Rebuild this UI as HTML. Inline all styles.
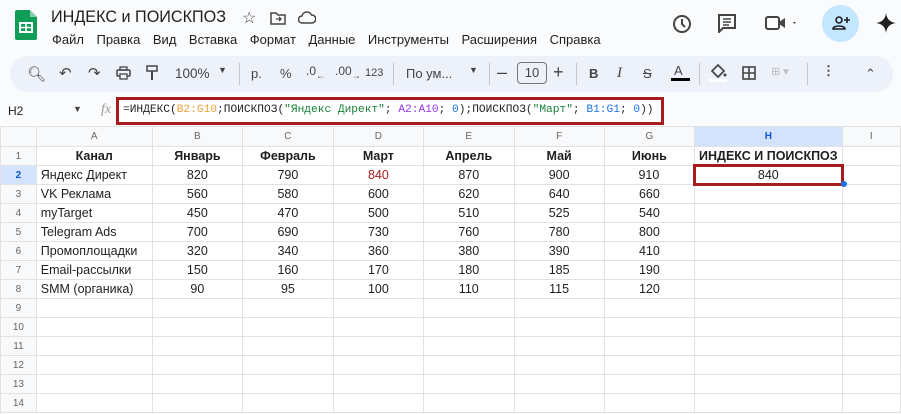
<!DOCTYPE html><html><head><meta charset="utf-8"><style>
*{box-sizing:border-box;margin:0;padding:0}
body{width:901px;height:414px;overflow:hidden;background:#f9fbfd;font-family:"Liberation Sans",Arial,sans-serif;position:relative;color:#1f1f1f}
.a{position:absolute}
.menu span{margin-right:12.5px;font-size:13px}
.tb{font-size:13px;color:#444}
table{border-collapse:collapse;position:absolute;left:0;top:126px;font-size:12.5px;background:#fff}
td{border:1px solid #e1e1e1;height:19px;padding:0 4px;white-space:nowrap;overflow:hidden}
td.rh{background:#f8f9fa;color:#666;font-size:10px;text-align:center;width:36px}
tr.ch td{background:#f8f9fa;color:#666;font-size:10px;text-align:center;height:20px}
td.n{text-align:center}
tr.h td{font-weight:bold;text-align:center}
</style></head><body>
<svg class="a" style="left:15px;top:10px" width="22" height="30" viewBox="0 0 22 30"><path d="M0 2a2 2 0 0 1 2-2h13l7 7v21a2 2 0 0 1-2 2H2a2 2 0 0 1-2-2z" fill="#0f9d58"/><path d="M15 0v7h7z" fill="#87ceac"/><rect x="5" y="13" width="12" height="9" fill="none" stroke="#fff" stroke-width="2"/><path d="M5 17.5h12M11 13v9" stroke="#fff" stroke-width="1.6"/></svg>
<div class="a" style="left:51px;top:8px;font-size:16.2px">ИНДЕКС и ПОИСКПОЗ</div>
<div class="a" style="left:242px;top:8px;font-size:16px;color:#444">☆</div>
<svg class="a" style="left:270px;top:12px" width="16" height="13"><path d="M1 1h5l2 2h7v9H1z" fill="none" stroke="#444" stroke-width="1.5"/><path d="M6 7h5M9 5l2 2-2 2" stroke="#444" fill="none" stroke-width="1.3"/></svg>
<svg class="a" style="left:298px;top:11px" width="18" height="13"><path d="M4 12a3.5 3.5 0 0 1 0-7 5 5 0 0 1 9.5-1A4 4 0 0 1 14 12z" fill="none" stroke="#444" stroke-width="1.5"/></svg>
<div class="a menu" style="left:52px;top:31px"><span>Файл</span><span>Правка</span><span>Вид</span><span>Вставка</span><span>Формат</span><span>Данные</span><span>Инструменты</span><span>Расширения</span><span>Справка</span></div>
<svg class="a" style="left:671px;top:13px" width="22" height="22"><circle cx="11" cy="11" r="8" fill="none" stroke="#444" stroke-width="2"/><path d="M11 6v5l3 3" stroke="#444" stroke-width="2" fill="none"/></svg>
<svg class="a" style="left:717px;top:13px" width="20" height="20"><path d="M2 2h16v13H6l-4 4z" fill="none" stroke="#444" stroke-width="2"/><path d="M6 6h8M6 9h8M6 12h6" stroke="#444" stroke-width="1.5"/></svg>
<svg class="a" style="left:765px;top:14px" width="34" height="18"><rect x="1" y="3" width="13" height="12" rx="2" fill="none" stroke="#444" stroke-width="2"/><path d="M14 8l6-4v10l-6-4" fill="#444"/><path d="M28 8l3 0-1.5 2z" fill="#444"/></svg>
<div class="a" style="left:822px;top:5px;width:37px;height:37px;border-radius:50%;background:#c2e7ff"></div>
<svg class="a" style="left:832px;top:15px" width="18" height="16"><circle cx="7" cy="5" r="3" fill="none" stroke="#1f1f1f" stroke-width="1.6"/><path d="M1 14c0-4 12-4 12 0z" fill="none" stroke="#1f1f1f" stroke-width="1.6"/><path d="M15 2v6M12 5h6" stroke="#1f1f1f" stroke-width="1.6"/></svg>
<svg class="a" style="left:876px;top:13px" width="20" height="20"><path d="M10 0Q11 9 20 10Q11 11 10 20Q9 11 0 10Q9 9 10 0z" fill="#1f1f1f"/></svg>
<div class="a" style="left:10px;top:56px;width:883px;height:36px;border-radius:18px;background:#edf2fa"></div>
<div class="a tb" style="left:27px;top:65px;font-size:15px">🔍︎</div>
<div class="a tb" style="left:59px;top:64px;font-size:15px">↶</div>
<div class="a tb" style="left:88px;top:64px;font-size:15px">↷</div>
<svg class="a" style="left:116px;top:66px" width="15" height="14"><rect x="1" y="4" width="13" height="6" rx="1" fill="none" stroke="#444" stroke-width="1.5"/><rect x="4" y="1" width="7" height="3" fill="none" stroke="#444" stroke-width="1.3"/><rect x="4" y="8" width="7" height="5" fill="#edf2fa" stroke="#444" stroke-width="1.3"/></svg>
<svg class="a" style="left:146px;top:65px" width="12" height="16"><rect x="1" y="1" width="10" height="5" fill="none" stroke="#444" stroke-width="1.5"/><path d="M6 6v3M6 9v6" stroke="#444" stroke-width="2"/></svg>
<div class="a tb" style="left:175px;top:66px;font-size:13.5px">100%</div>
<div class="a tb" style="left:218px;top:65px;font-size:9px">▼</div>
<div class="a" style="left:239px;top:63px;width:1px;height:22px;background:#c7c7c7"></div>
<div class="a tb" style="left:251px;top:66px">р.</div>
<div class="a tb" style="left:280px;top:66px">%</div>
<div class="a tb" style="left:306px;top:64px;font-size:12px">.0<sub style="font-size:9px">←</sub></div>
<div class="a tb" style="left:335px;top:64px;font-size:12px">.00<sub style="font-size:9px">→</sub></div>
<div class="a tb" style="left:365px;top:67px;font-size:11px">123</div>
<div class="a" style="left:393px;top:63px;width:1px;height:22px;background:#c7c7c7"></div>
<div class="a tb" style="left:406px;top:66px">По ум...</div>
<div class="a tb" style="left:469px;top:65px;font-size:9px">▼</div>
<div class="a" style="left:489px;top:63px;width:1px;height:22px;background:#c7c7c7"></div>
<div class="a tb" style="left:497px;top:62px;font-size:18px">–</div>
<div class="a" style="left:517px;top:62px;width:30px;height:22px;border:1px solid #747775;border-radius:4px;text-align:center;font-size:13px;line-height:20px;color:#444">10</div>
<div class="a tb" style="left:553px;top:62px;font-size:18px">+</div>
<div class="a" style="left:576px;top:63px;width:1px;height:22px;background:#c7c7c7"></div>
<div class="a tb" style="left:589px;top:66px;font-weight:bold">B</div>
<div class="a tb" style="left:617px;top:65px;font-style:italic;font-family:'Liberation Serif';font-size:15px">I</div>
<div class="a tb" style="left:643px;top:66px;text-decoration:line-through">S</div>
<div class="a tb" style="left:674px;top:63px">A</div>
<div class="a" style="left:671px;top:78px;width:19px;height:3px;background:#000"></div>
<div class="a" style="left:699px;top:63px;width:1px;height:22px;background:#c7c7c7"></div>
<svg class="a" style="left:708px;top:63px" width="20" height="20"><path d="M4 8l6-6 6 6-6 6z" fill="none" stroke="#444" stroke-width="1.7"/><circle cx="17" cy="12" r="1.5" fill="#444"/><rect x="1" y="16" width="18" height="3" fill="#fff"/></svg>
<svg class="a" style="left:742px;top:66px" width="14" height="14"><rect x="1" y="1" width="12" height="12" fill="none" stroke="#444" stroke-width="1.6"/><path d="M7 1v12M1 7h12" stroke="#444" stroke-width="1.6"/></svg>
<div class="a tb" style="left:771px;top:65px;color:#bbb;font-size:11px">⊞ ▾</div>
<div class="a" style="left:807px;top:63px;width:1px;height:22px;background:#c7c7c7"></div>
<div class="a tb" style="left:822px;top:63px;font-weight:bold">⋮</div>
<div class="a tb" style="left:865px;top:66px;font-size:13px">⌃</div>
<div class="a" style="left:8px;top:104px;font-size:12px">H2</div>
<div class="a" style="left:73px;top:104px;font-size:9px;color:#444">▼</div>
<div class="a" style="left:101px;top:102px;font-size:14px;font-style:italic;color:#999;font-family:'Liberation Serif'">fx</div>
<div class="a" style="left:116px;top:97px;width:548px;height:28px;border:3px solid #a61c1c;background:#fff"></div>
<div class="a" style="left:123px;top:104px;font-family:'Liberation Mono',monospace;font-size:11.2px;letter-spacing:0px;white-space:nowrap">=ИНДЕКС(<span style="color:#e9a23b">B2:G10</span>;ПОИСКПОЗ(<span style="color:#188038">"Яндекс Директ"</span>; <span style="color:#9334e6">A2:A10</span>; <span style="color:#1a73e8">0</span>);ПОИСКПОЗ(<span style="color:#188038">"Март"</span>; <span style="color:#1a73e8">B1:G1</span>; <span style="color:#1a73e8">0</span>))</div>
<table>
<colgroup><col style="width:36px"><col style="width:116px"><col style="width:91px"><col style="width:91px"><col style="width:91px"><col style="width:91px"><col style="width:91px"><col style="width:91px"><col style="width:144px"><col style="width:59px"></colgroup>
<tr class="ch"><td></td><td>A</td><td>B</td><td>C</td><td>D</td><td>E</td><td>F</td><td>G</td><td style="background:#d3e3fd;color:#0b57d0;font-weight:bold">H</td><td>I</td></tr>
<tr class="h"><td class="rh" style="font-weight:normal">1</td><td>Канал</td><td>Январь</td><td>Февраль</td><td>Март</td><td>Апрель</td><td>Май</td><td>Июнь</td><td>ИНДЕКС И ПОИСКПОЗ</td><td></td></tr>
<tr><td class="rh" style="background:#d3e3fd;color:#0b57d0;font-weight:bold">2</td><td>Яндекс Директ</td><td class="n">820</td><td class="n">790</td><td class="n" style="color:#a61c1c">840</td><td class="n">870</td><td class="n">900</td><td class="n">910</td><td class="n" style="border:3px solid #a61c1c">840</td><td></td></tr>
<tr><td class="rh">3</td><td>VK Реклама</td><td class="n">560</td><td class="n">580</td><td class="n">600</td><td class="n">620</td><td class="n">640</td><td class="n">660</td><td></td><td></td></tr>
<tr><td class="rh">4</td><td>myTarget</td><td class="n">450</td><td class="n">470</td><td class="n">500</td><td class="n">510</td><td class="n">525</td><td class="n">540</td><td></td><td></td></tr>
<tr><td class="rh">5</td><td>Telegram Ads</td><td class="n">700</td><td class="n">690</td><td class="n">730</td><td class="n">760</td><td class="n">780</td><td class="n">800</td><td></td><td></td></tr>
<tr><td class="rh">6</td><td>Промоплощадки</td><td class="n">320</td><td class="n">340</td><td class="n">360</td><td class="n">380</td><td class="n">390</td><td class="n">410</td><td></td><td></td></tr>
<tr><td class="rh">7</td><td>Email-рассылки</td><td class="n">150</td><td class="n">160</td><td class="n">170</td><td class="n">180</td><td class="n">185</td><td class="n">190</td><td></td><td></td></tr>
<tr><td class="rh">8</td><td>SMM (органика)</td><td class="n">90</td><td class="n">95</td><td class="n">100</td><td class="n">110</td><td class="n">115</td><td class="n">120</td><td></td><td></td></tr>
<tr><td class="rh">9</td><td></td><td></td><td></td><td></td><td></td><td></td><td></td><td></td><td></td></tr>
<tr><td class="rh">10</td><td></td><td></td><td></td><td></td><td></td><td></td><td></td><td></td><td></td></tr>
<tr><td class="rh">11</td><td></td><td></td><td></td><td></td><td></td><td></td><td></td><td></td><td></td></tr>
<tr><td class="rh">12</td><td></td><td></td><td></td><td></td><td></td><td></td><td></td><td></td><td></td></tr>
<tr><td class="rh">13</td><td></td><td></td><td></td><td></td><td></td><td></td><td></td><td></td><td></td></tr>
<tr><td class="rh">14</td><td></td><td></td><td></td><td></td><td></td><td></td><td></td><td></td><td></td></tr>
</table>
<div class="a" style="left:841px;top:181px;width:6px;height:6px;border-radius:50%;background:#1a73e8"></div>
</body></html>
